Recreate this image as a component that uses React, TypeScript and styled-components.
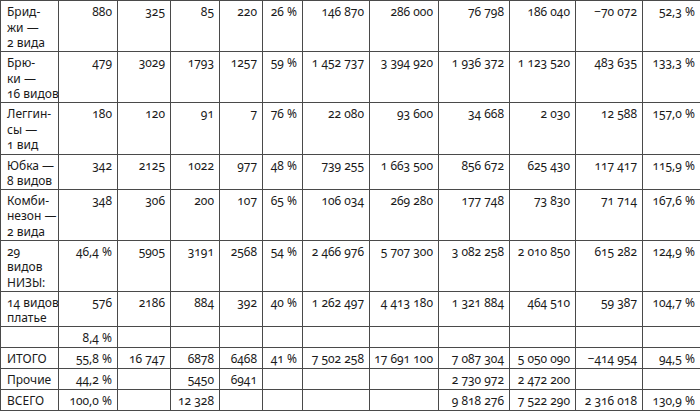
import React from "react";
import styled, { createGlobalStyle } from "styled-components";

const Global = createGlobalStyle`
  html, body { margin: 0; padding: 0; background: #fff; }
  body { font-family: "Noto Sans", "Open Sans", sans-serif; }
`;

const Table = styled.table`
  width: 700px;
  table-layout: fixed;
  border-collapse: collapse;
  font-family: "Noto Sans", "Open Sans", sans-serif;
  font-size: 12px;
  line-height: 15.5px;
  color: #1a1a1a;
  font-variant-numeric: oldstyle-nums;
  font-feature-settings: "onum" 1;
`;

const Row = styled.tr<{ $lines: number }>`
  height: ${(p) => (p.$lines === 1 ? 21 : p.$lines === 2 ? 35 : 51.2)}px;
`;

const Cell = styled.td<{ $label?: boolean }>`
  border: 1px solid #4a4a4a;
  padding: 3px ${(p) => (p.$label ? "2px" : "5px")} 0 ${(p) => (p.$label ? "6px" : "2px")};
  text-align: ${(p) => (p.$label ? "left" : "right")};
  vertical-align: top;
  white-space: nowrap;
`;

const LabelLine = styled.div`
  height: 15.5px;
`;

const widths = [58, 59, 53, 49, 43, 40, 67, 69, 71, 66, 67, 58];

type RowData = { label: string[]; cells: string[] };

const rows: RowData[] = [
  { label: ["Брид-", "жи —", "2 вида"], cells: ["880", "325", "85", "220", "26 %", "146 870", "286 000", "76 798", "186 040", "−70 072", "52,3 %"] },
  { label: ["Брю-", "ки —", "16 видов"], cells: ["479", "3029", "1793", "1257", "59 %", "1 452 737", "3 394 920", "1 936 372", "1 123 520", "483 635", "133,3 %"] },
  { label: ["Леггин-", "сы —", "1 вид"], cells: ["180", "120", "91", "7", "76 %", "22 080", "93 600", "34 668", "2 030", "12 588", "157,0 %"] },
  { label: ["Юбка —", "8 видов"], cells: ["342", "2125", "1022", "977", "48 %", "739 255", "1 663 500", "856 672", "625 430", "117 417", "115,9 %"] },
  { label: ["Комби-", "незон —", "2 вида"], cells: ["348", "306", "200", "107", "65 %", "106 034", "269 280", "177 748", "73 830", "71 714", "167,6 %"] },
  { label: ["29", "видов", "НИЗЫ:"], cells: ["46,4 %", "5905", "3191", "2568", "54 %", "2 466 976", "5 707 300", "3 082 258", "2 010 850", "615 282", "124,9 %"] },
  { label: ["14 видов", "платье"], cells: ["576", "2186", "884", "392", "40 %", "1 262 497", "4 413 180", "1 321 884", "464 510", "59 387", "104,7 %"] },
  { label: [""], cells: ["8,4 %", "", "", "", "", "", "", "", "", "", ""] },
  { label: ["ИТОГО"], cells: ["55,8 %", "16 747", "6878", "6468", "41 %", "7 502 258", "17 691 100", "7 087 304", "5 050 090", "−414 954", "94,5 %"] },
  { label: ["Прочие"], cells: ["44,2 %", "", "5450", "6941", "", "", "", "2 730 972", "2 472 200", "", ""] },
  { label: ["ВСЕГО"], cells: ["100,0 %", "", "12 328", "", "", "", "", "9 818 276", "7 522 290", "2 316 018", "130,9 %"] },
];

export default function App() {
  return (
    <>
      <Global />
      <Table>
        <colgroup>
          {widths.map((w, i) => (
            <col key={i} style={{ width: w }} />
          ))}
        </colgroup>
        <tbody>
          {rows.map((r, i) => (
            <Row key={i} $lines={r.label.length}>
              <Cell $label>
                {r.label.map((l, j) => (
                  <LabelLine key={j}>{l || "\u00a0"}</LabelLine>
                ))}
              </Cell>
              {r.cells.map((c, j) => (
                <Cell key={j}>{c || "\u00a0"}</Cell>
              ))}
            </Row>
          ))}
        </tbody>
      </Table>
    </>
  );
}
